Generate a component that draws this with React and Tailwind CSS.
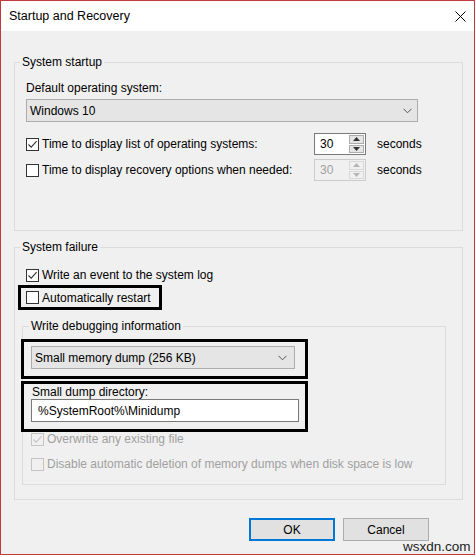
import React from "react";

const CheckBox = ({ checked, disabled }) => {
  return (
    <span
      className={`flex h-[13px] w-[13px] shrink-0 items-center justify-center border ${
        disabled ? "border-[#c4c4c4] bg-[#f0f0f0]" : "border-[#333333] bg-white"
      }`}
    >
      {checked && (
        <svg width="11" height="11" viewBox="0 0 11 11">
          <path
            d="M1.5 5.5 L4.2 8.2 L9.6 2.2"
            fill="none"
            stroke={disabled ? "#c4c4c4" : "#333333"}
            strokeWidth="1.1"
          />
        </svg>
      )}
    </span>
  );
};

const Chevron = () => (
  <svg width="9" height="6" viewBox="0 0 9 6">
    <path d="M0.5 0.8 L4.5 4.8 L8.5 0.8" fill="none" stroke="#555555" strokeWidth="1" />
  </svg>
);

const Arrow = ({ up, disabled }) => (
  <svg width="7" height="4" viewBox="0 0 7 4">
    <path
      d={up ? "M0 4 L3.5 0 L7 4 Z" : "M0 0 L3.5 4 L7 0 Z"}
      fill={disabled ? "#b5b5b5" : "#333333"}
    />
  </svg>
);

const Spin = ({ disabled }) => {
  return (
    <div
      className={`flex h-[22px] w-[52px] border ${
        disabled ? "border-[#cccccc] bg-[#f0f0f0] text-[#a0a0a0]" : "border-[#7a7a7a] bg-white"
      }`}
    >
      <span className="flex-1 pl-[5px] leading-[20px]">30</span>
      <div className="flex w-[16px] flex-col gap-[1px] py-[1px] pr-[1px]">
        <span
          className={`flex flex-1 items-center justify-center border ${
            disabled ? "border-[#d9d9d9] bg-[#f0f0f0]" : "border-[#adadad] bg-[#e5e5e5]"
          }`}
        >
          <Arrow up disabled={disabled} />
        </span>
        <span
          className={`flex flex-1 items-center justify-center border ${
            disabled ? "border-[#d9d9d9] bg-[#f0f0f0]" : "border-[#adadad] bg-[#e5e5e5]"
          }`}
        >
          <Arrow disabled={disabled} />
        </span>
      </div>
    </div>
  );
};

const App = () => {
  return (
    <div className="relative h-[557px] w-[476px] bg-white font-['Liberation_Sans',Arial,sans-serif] text-[12px] leading-[16px] text-black">
      <div className="flex h-[555px] w-[475px] flex-col border border-[#c4393c] bg-[#f0f0f0]">
        {/* title bar */}
        <div className="flex h-[30px] items-center justify-between bg-white px-[8px]">
          <span className="text-[12.5px]">Startup and Recovery</span>
          <svg width="11" height="11" viewBox="0 0 11 11">
            <path d="M0.5 0.5 L10.5 10.5 M10.5 0.5 L0.5 10.5" stroke="#000" strokeWidth="1" />
          </svg>
        </div>

        <div className="px-[13px] pt-[23px]">
          {/* System startup */}
          <fieldset className="w-[449px] border border-[#dcdcdc]">
            <legend className="ml-[5px] px-[2px] leading-[16px]">System startup</legend>
            <div className="px-[11px] pt-[10px] pb-[49px]">
              <div>Default operating system:</div>
              <div className="mt-[3px] flex h-[23px] w-[392px] items-center justify-between border border-[#adadad] bg-[#e5e5e5] pl-[3px] pr-[5px]">
                <span>Windows 10</span>
                <Chevron />
              </div>
              <div className="mt-[11px] flex h-[22px] items-center">
                <div className="flex w-[288px] items-center gap-[3px]">
                  <CheckBox checked />
                  <span>Time to display list of operating systems:</span>
                </div>
                <Spin />
                <span className="ml-[11px]">seconds</span>
              </div>
              <div className="mt-[4px] flex h-[22px] items-center">
                <div className="flex w-[288px] items-center gap-[3px]">
                  <CheckBox />
                  <span>Time to display recovery options when needed:</span>
                </div>
                <Spin disabled />
                <span className="ml-[11px]">seconds</span>
              </div>
            </div>
          </fieldset>

          {/* System failure */}
          <fieldset className="mt-[8px] w-[449px] border border-[#dcdcdc]">
            <legend className="ml-[5px] px-[2px] leading-[16px]">System failure</legend>
            <div className="px-[11px] pt-[12px] pb-[14px]">
              <div className="flex h-[16px] items-center gap-[3px]">
                <CheckBox checked />
                <span>Write an event to the system log</span>
              </div>
              <div className="mt-[2px] -ml-[8px] flex h-[25px] w-[144px] items-center gap-[3px] border-[3px] border-black pl-[5px]">
                <CheckBox />
                <span>Automatically restart</span>
              </div>

              <fieldset className="mt-[8px] -ml-[4px] w-[424px] border border-[#dcdcdc]">
                <legend className="ml-[6px] px-[2px] leading-[16px]">Write debugging information</legend>
                <div className="px-[8px] pb-[12px]">
                  <div className="mt-[5px] -ml-[10px] h-[40px] w-[287px] border-[3px] border-black pt-[4px] pl-[7px]">
                    <div className="flex h-[23px] w-[264px] items-center justify-between border border-[#adadad] bg-[#e5e5e5] pl-[3px] pr-[7px]">
                      <span>Small memory dump (256 KB)</span>
                      <Chevron />
                    </div>
                  </div>
                  <div className="mt-[2px] -ml-[10px] flex h-[51px] w-[287px] flex-col border-[3px] border-black pl-[7px]">
                    <span className="pl-[1px] pt-[1px] leading-[14px]">Small dump directory:</span>
                    <div className="flex h-[23px] w-[268px] items-center border border-[#7a7a7a] bg-white pl-[6px]">
                      %SystemRoot%\Minidump
                    </div>
                  </div>
                  <div className="-mt-[1px] flex h-[16px] items-center gap-[3px] text-[#a0a0a0]">
                    <CheckBox checked disabled />
                    <span>Overwrite any existing file</span>
                  </div>
                  <div className="mt-[9px] flex h-[16px] items-center gap-[3px] text-[#a0a0a0]">
                    <CheckBox disabled />
                    <span>Disable automatic deletion of memory dumps when disk space is low</span>
                  </div>
                </div>
              </fieldset>
            </div>
          </fieldset>

          <div className="mt-[18px] flex justify-end gap-[8px] pr-[32px]">
            <button className="h-[23px] w-[86px] border-2 border-[#0078d7] bg-[#e1e1e1]">OK</button>
            <button className="h-[23px] w-[86px] border border-[#adadad] bg-[#e1e1e1]">Cancel</button>
          </div>
        </div>
      </div>
      <span className="absolute left-[403px] top-[539px] text-[13.5px] text-[#222222]">wsxdn.com</span>
    </div>
  );
};

export default App;
